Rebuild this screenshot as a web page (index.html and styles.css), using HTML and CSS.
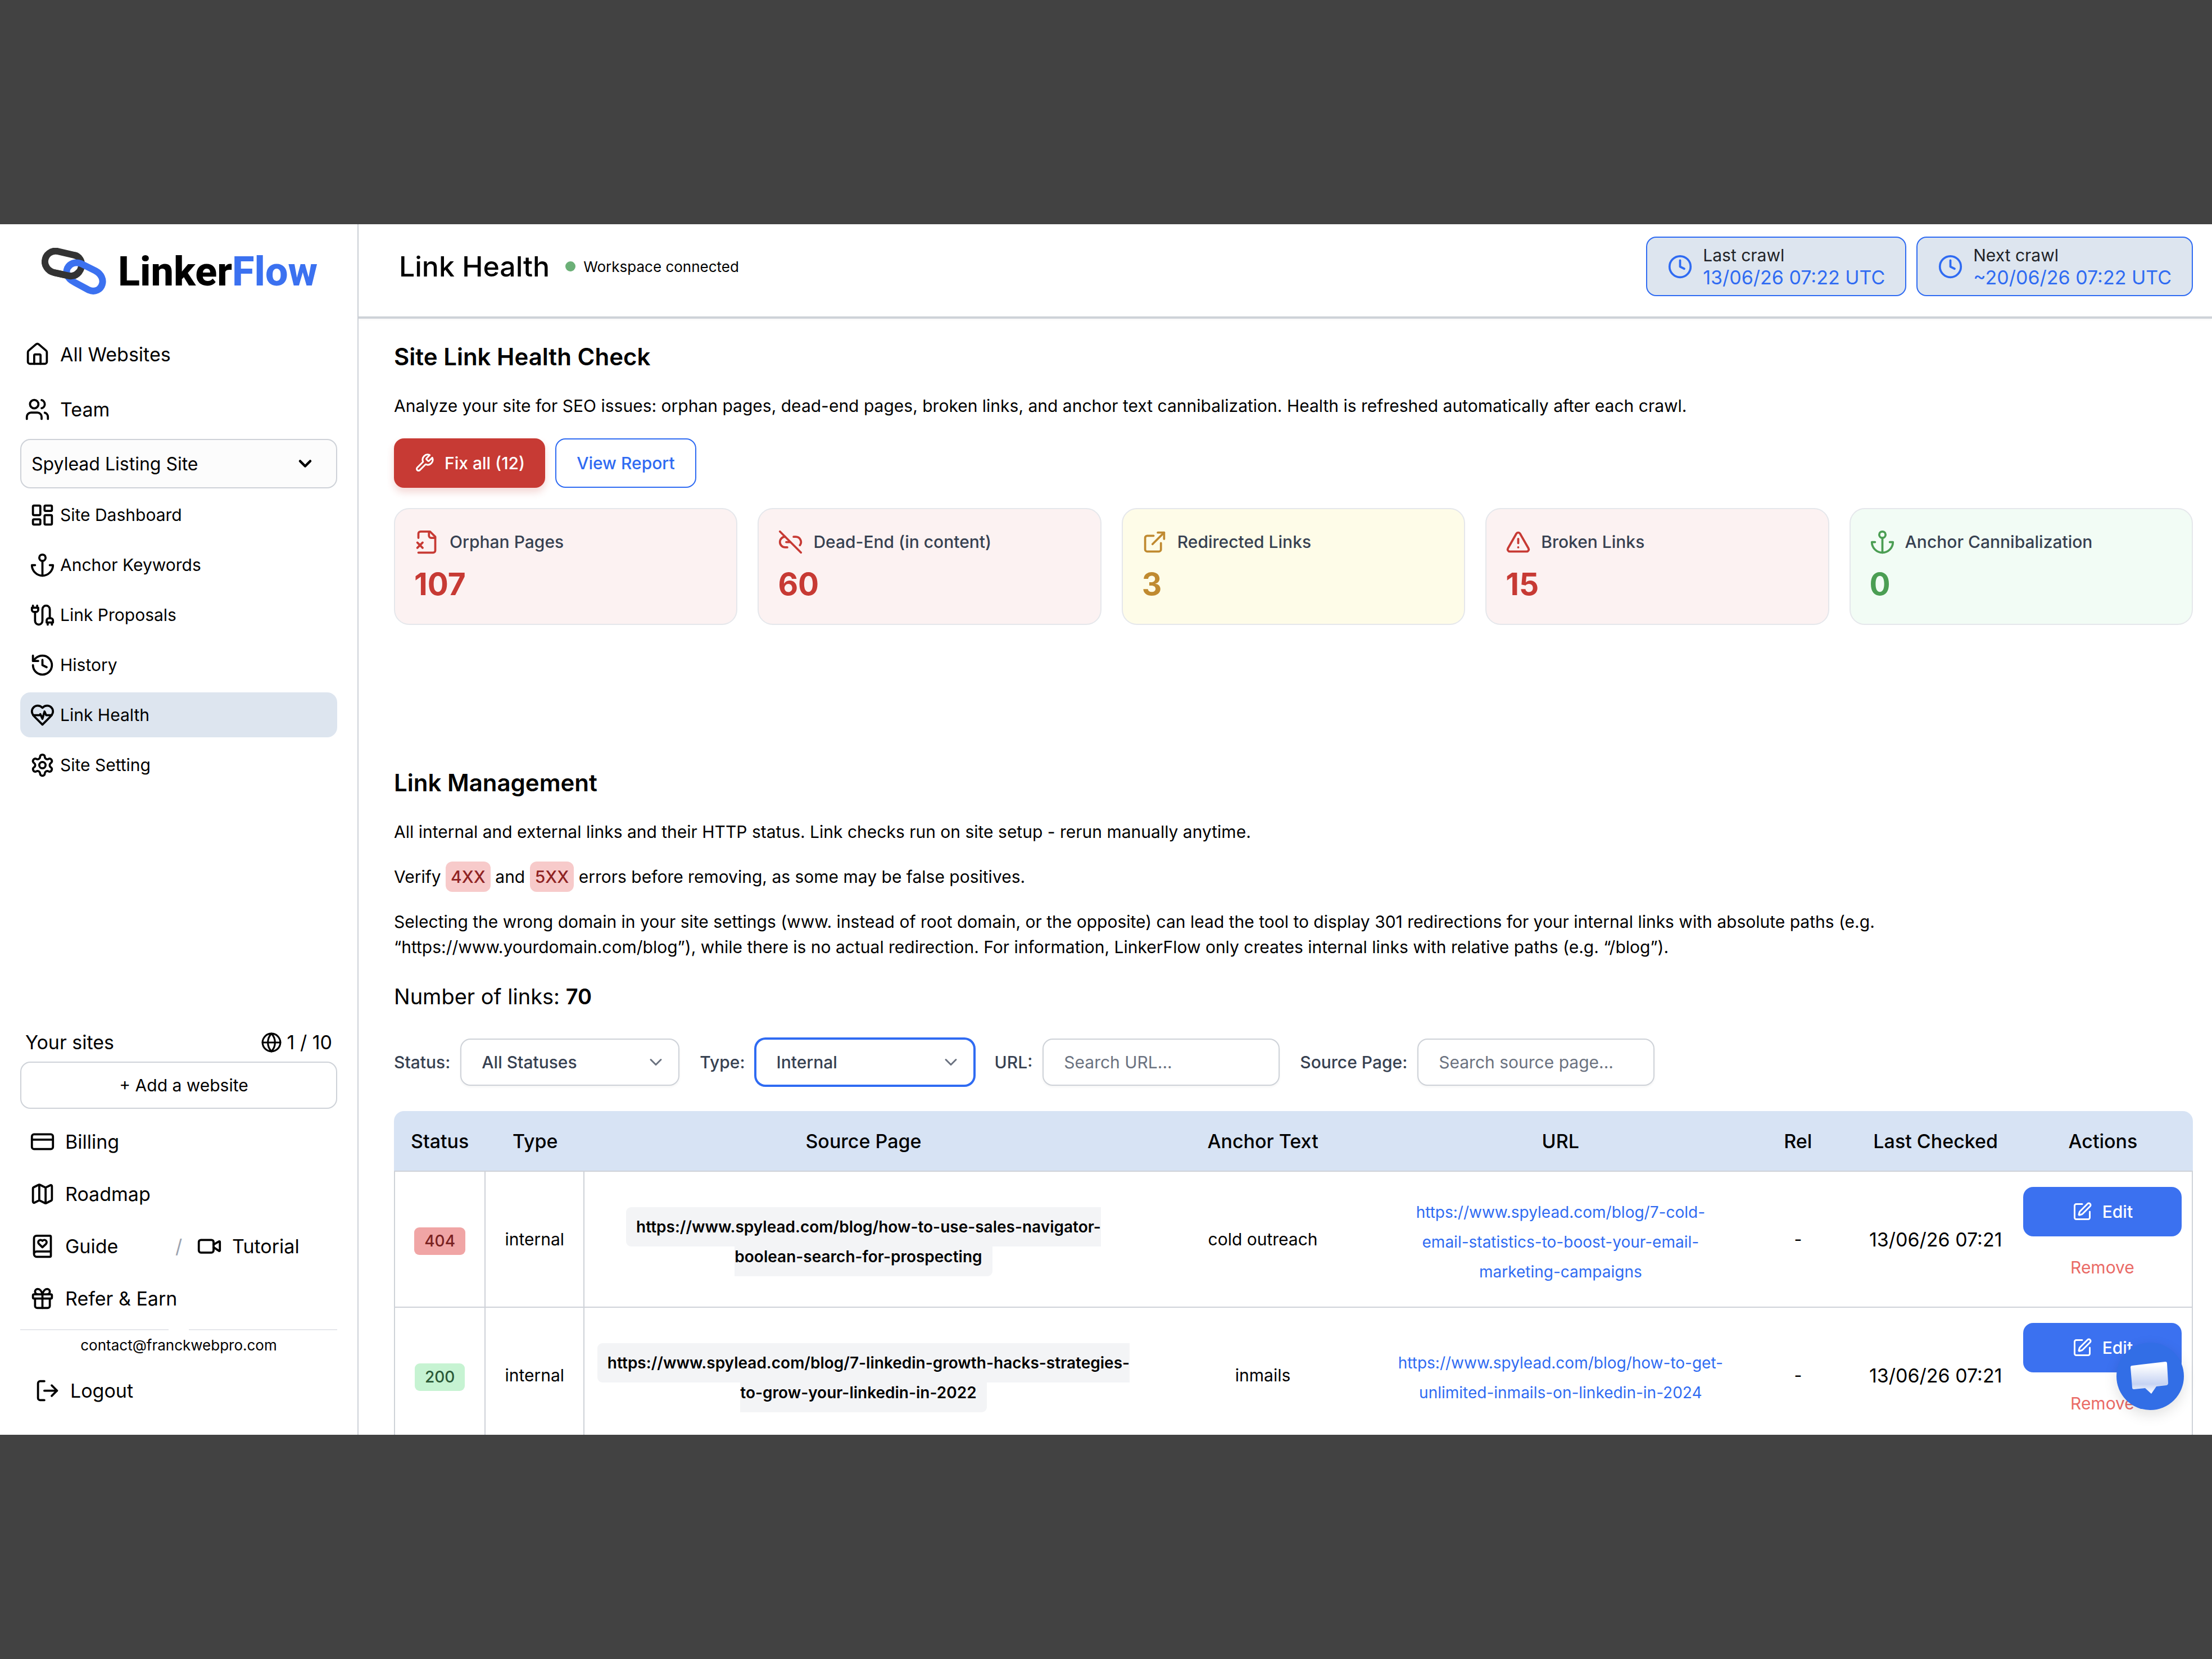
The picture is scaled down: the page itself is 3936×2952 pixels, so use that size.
FILE: index.html
```html
<!DOCTYPE html>
<html lang="en">
<head>
    <meta charset="UTF-8">
    <title>Link Health - LinkerFlow</title>
    <link rel="stylesheet" href="styles.css">
</head>
<body>
<div class="app">
    <aside class="sidebar">
        <a class="logo" href="#">
            <svg class="logo-mark" viewBox="0 0 116 84" fill="none" stroke-width="12">
                <path stroke="#333" d="M28 6L58 13C68 15 72 24 71 32C70 43 60 52 50 50L22 44C10 41 5 30 6 23C7 12 17 4 28 6Z"/>
                <path stroke="#3b71f0" d="M70 28L96 41C107 47 110 57 108 64C106 74 95 80 84 75L58 61C46 55 42 45 46 36C50 28 60 24 70 28Z"/>
                <path stroke="#333" d="M67 42C63 48 56 51 50 50L22 44"/>
            </svg>
            <span class="logo-text">Linker<span>Flow</span></span>
        </a>

        <nav class="main-nav">
            <a href="#">
                <svg class="icon" viewBox="0 0 24 24"><path d="M15 21v-8a1 1 0 0 0-1-1h-4a1 1 0 0 0-1 1v8"/><path d="M3 10a2 2 0 0 1 .709-1.528l7-6a2 2 0 0 1 2.582 0l7 6A2 2 0 0 1 21 10v9a2 2 0 0 1-2 2H5a2 2 0 0 1-2-2z"/></svg>
                All Websites
            </a>
            <a href="#">
                <svg class="icon" viewBox="0 0 24 24"><path d="M16 21v-2a4 4 0 0 0-4-4H6a4 4 0 0 0-4 4v2"/><circle cx="9" cy="7" r="4"/><path d="M22 21v-2a4 4 0 0 0-3-3.87"/><path d="M16 3.13a4 4 0 0 1 0 7.75"/></svg>
                Team
            </a>
        </nav>

        <div class="select site-select">
            <select aria-label="Site">
                <option>Spylead Listing Site</option>
            </select>
            <svg class="icon" viewBox="0 0 24 24"><path d="m6 9 6 6 6-6"/></svg>
        </div>

        <nav class="site-nav">
            <a href="#">
                <svg class="icon" viewBox="0 0 24 24"><rect x="3" y="3" width="7" height="9" rx="1"/><rect x="14" y="3" width="7" height="5" rx="1"/><rect x="14" y="12" width="7" height="9" rx="1"/><rect x="3" y="16" width="7" height="5" rx="1"/></svg>
                Site Dashboard
            </a>
            <a href="#">
                <svg class="icon" viewBox="0 0 24 24"><path d="M12 22V8"/><path d="M5 12H2a10 10 0 0 0 20 0h-3"/><circle cx="12" cy="5" r="3"/></svg>
                Anchor Keywords
            </a>
            <a href="#">
                <svg class="icon" viewBox="0 0 24 24"><path d="M4 9a2 2 0 0 1-2-2V5h6v2a2 2 0 0 1-2 2Z"/><path d="M3 5V3"/><path d="M7 5V3"/><path d="M19 15V6.5a3.5 3.5 0 0 0-7 0v11a3.5 3.5 0 0 1-7 0V9"/><path d="M17 21v-2"/><path d="M21 21v-2"/><path d="M22 19h-6v-2a2 2 0 0 1 2-2h2a2 2 0 0 1 2 2Z"/></svg>
                Link Proposals
            </a>
            <a href="#">
                <svg class="icon" viewBox="0 0 24 24"><path d="M3 12a9 9 0 1 0 9-9 9.75 9.75 0 0 0-6.74 2.74L3 8"/><path d="M3 3v5h5"/><path d="M12 7v5l4 2"/></svg>
                History
            </a>
            <a class="active" href="#">
                <svg class="icon" viewBox="0 0 24 24"><path d="M19 14c1.49-1.46 3-3.21 3-5.5A5.5 5.5 0 0 0 16.5 3c-1.76 0-3 .5-4.5 2-1.5-1.5-2.74-2-4.5-2A5.5 5.5 0 0 0 2 8.5c0 2.3 1.5 4.05 3 5.5l7 7Z"/><path d="M3.22 12H9.5l.5-1 2 4.5 2-7 1.5 3.5h5.27"/></svg>
                Link Health
            </a>
            <a href="#">
                <svg class="icon" viewBox="0 0 24 24"><path d="M12.22 2h-.44a2 2 0 0 0-2 2v.18a2 2 0 0 1-1 1.73l-.43.25a2 2 0 0 1-2 0l-.15-.08a2 2 0 0 0-2.73.73l-.22.38a2 2 0 0 0 .73 2.73l.15.1a2 2 0 0 1 1 1.72v.51a2 2 0 0 1-1 1.74l-.15.09a2 2 0 0 0-.73 2.73l.22.38a2 2 0 0 0 2.73.73l.15-.08a2 2 0 0 1 2 0l.43.25a2 2 0 0 1 1 1.73V20a2 2 0 0 0 2 2h.44a2 2 0 0 0 2-2v-.18a2 2 0 0 1 1-1.73l.43-.25a2 2 0 0 1 2 0l.15.08a2 2 0 0 0 2.73-.73l.22-.39a2 2 0 0 0-.73-2.73l-.15-.08a2 2 0 0 1-1-1.74v-.5a2 2 0 0 1 1-1.74l.15-.09a2 2 0 0 0 .73-2.73l-.22-.38a2 2 0 0 0-2.73-.73l-.15.08a2 2 0 0 1-2 0l-.43-.25a2 2 0 0 1-1-1.73V4a2 2 0 0 0-2-2z"/><circle cx="12" cy="12" r="3"/></svg>
                Site Setting
            </a>
        </nav>

        <div class="sidebar-bottom">
            <div class="your-sites">
                <span>Your sites</span>
                <span class="site-count">
                    <svg class="icon" viewBox="0 0 24 24"><circle cx="12" cy="12" r="10"/><path d="M12 2a14.5 14.5 0 0 0 0 20 14.5 14.5 0 0 0 0-20"/><path d="M2 12h20"/></svg>
                    1 / 10
                </span>
            </div>
            <button class="add-site" type="button">+ Add a website</button>

            <nav class="help-nav">
                <a href="#">
                    <svg class="icon" viewBox="0 0 24 24"><rect x="2" y="5" width="20" height="14" rx="2"/><path d="M2 10h20"/></svg>
                    Billing
                </a>
                <a href="#">
                    <svg class="icon" viewBox="0 0 24 24"><path d="M14.106 5.553a2 2 0 0 0 1.788 0l3.659-1.83A1 1 0 0 1 21 4.619v12.764a1 1 0 0 1-.553.894l-4.553 2.277a2 2 0 0 1-1.788 0l-4.212-2.106a2 2 0 0 0-1.788 0l-3.659 1.83A1 1 0 0 1 3 19.381V6.618a1 1 0 0 1 .553-.894l4.553-2.277a2 2 0 0 1 1.788 0z"/><path d="M15 5.764v15"/><path d="M9 3.236v15"/></svg>
                    Roadmap
                </a>
                <div class="help-row">
                    <a href="#">
                        <svg class="icon" viewBox="0 0 24 24"><path d="M16 8.2A2.22 2.22 0 0 0 13.8 6c-.8 0-1.4.3-1.8.9-.4-.6-1-.9-1.8-.9A2.22 2.22 0 0 0 8 8.2c0 .6.3 1.2.7 1.6A226.652 226.652 0 0 0 12 13a404 404 0 0 0 3.3-3.1 2.413 2.413 0 0 0 .7-1.7"/><path d="M4 19.5v-15A2.5 2.5 0 0 1 6.5 2H19a1 1 0 0 1 1 1v18a1 1 0 0 1-1 1H6.5a1 1 0 0 1 0-5H20"/></svg>
                        Guide
                    </a>
                    <span class="slash">/</span>
                    <a href="#">
                        <svg class="icon" viewBox="0 0 24 24"><path d="m16 13 5.223 3.482a.5.5 0 0 0 .777-.416V7.87a.5.5 0 0 0-.752-.432L16 10.5"/><rect x="2" y="6" width="14" height="12" rx="2"/></svg>
                        Tutorial
                    </a>
                </div>
                <a href="#">
                    <svg class="icon" viewBox="0 0 24 24"><rect x="3" y="8" width="18" height="4" rx="1"/><path d="M12 8v13"/><path d="M19 12v7a2 2 0 0 1-2 2H7a2 2 0 0 1-2-2v-7"/><path d="M7.5 8a2.5 2.5 0 0 1 0-5A4.8 8 0 0 1 12 8a4.8 8 0 0 1 4.5-5 2.5 2.5 0 0 1 0 5"/></svg>
                    Refer &amp; Earn
                </a>
            </nav>

            <div class="divider"></div>
            <p class="account">contact@franckwebpro.com</p>
            <a class="logout" href="#">
                <svg class="icon" viewBox="0 0 24 24"><path d="M9 21H5a2 2 0 0 1-2-2V5a2 2 0 0 1 2-2h4"/><path d="m16 17 5-5-5-5"/><path d="M21 12H9"/></svg>
                Logout
            </a>
        </div>
    </aside>

    <main class="main">
        <header class="topbar">
            <h1>Link Health</h1>
            <span class="workspace">Workspace connected</span>
            <div class="crawls">
                <div class="crawl">
                    <svg class="icon" viewBox="0 0 24 24"><circle cx="12" cy="12" r="10"/><path d="M12 6v6l4 2"/></svg>
                    <div>
                        <div class="crawl-label">Last crawl</div>
                        <div class="crawl-date">13/06/26 07:22 UTC</div>
                    </div>
                </div>
                <div class="crawl">
                    <svg class="icon" viewBox="0 0 24 24"><circle cx="12" cy="12" r="10"/><path d="M12 6v6l4 2"/></svg>
                    <div>
                        <div class="crawl-label">Next crawl</div>
                        <div class="crawl-date">~20/06/26 07:22 UTC</div>
                    </div>
                </div>
            </div>
        </header>

        <div class="content">
            <section class="health">
                <h2>Site Link Health Check</h2>
                <p>Analyze your site for SEO issues: orphan pages, dead-end pages, broken links, and anchor text cannibalization. Health is refreshed automatically after each crawl.</p>
                <div class="actions">
                    <button class="btn btn-danger" type="button">
                        <svg class="icon" viewBox="0 0 24 24"><path d="M14.7 6.3a1 1 0 0 0 0 1.4l1.6 1.6a1 1 0 0 0 1.4 0l3.77-3.77a6 6 0 0 1-7.94 7.94l-6.91 6.91a2.12 2.12 0 0 1-3-3l6.91-6.91a6 6 0 0 1 7.94-7.94l-3.76 3.76z"/></svg>
                        Fix all (12)
                    </button>
                    <button class="btn btn-outline" type="button">View Report</button>
                </div>
                <div class="cards">
                    <div class="card card-red">
                        <div class="card-title">
                            <svg class="icon" viewBox="0 0 24 24"><path d="M4 22h14a2 2 0 0 0 2-2V7l-5-5H6a2 2 0 0 0-2 2v4"/><path d="M14 2v4a2 2 0 0 0 2 2h4"/><path d="m8 12.5-5 5"/><path d="m3 12.5 5 5"/></svg>
                            Orphan Pages
                        </div>
                        <div class="card-value">107</div>
                    </div>
                    <div class="card card-red">
                        <div class="card-title">
                            <svg class="icon" viewBox="0 0 24 24"><path d="M9 17H7A5 5 0 0 1 7 7"/><path d="M15 7h2a5 5 0 0 1 4 8"/><path d="M8 12h4"/><path d="m2 2 20 20"/></svg>
                            Dead-End (in content)
                        </div>
                        <div class="card-value">60</div>
                    </div>
                    <div class="card card-yellow">
                        <div class="card-title">
                            <svg class="icon" viewBox="0 0 24 24"><path d="M15 3h6v6"/><path d="M10 14 21 3"/><path d="M18 13v6a2 2 0 0 1-2 2H5a2 2 0 0 1-2-2V8a2 2 0 0 1 2-2h6"/></svg>
                            Redirected Links
                        </div>
                        <div class="card-value">3</div>
                    </div>
                    <div class="card card-red">
                        <div class="card-title">
                            <svg class="icon" viewBox="0 0 24 24"><path d="m21.73 18-8-14a2 2 0 0 0-3.48 0l-8 14A2 2 0 0 0 4 21h16a2 2 0 0 0 1.73-3"/><path d="M12 9v4"/><path d="M12 17h.01"/></svg>
                            Broken Links
                        </div>
                        <div class="card-value">15</div>
                    </div>
                    <div class="card card-green">
                        <div class="card-title">
                            <svg class="icon" viewBox="0 0 24 24"><path d="M12 22V8"/><path d="M5 12H2a10 10 0 0 0 20 0h-3"/><circle cx="12" cy="5" r="3"/></svg>
                            Anchor Cannibalization
                        </div>
                        <div class="card-value">0</div>
                    </div>
                </div>
            </section>

            <section class="links">
                <h2>Link Management</h2>
                <p>All internal and external links and their HTTP status. Link checks run on site setup - rerun manually anytime.</p>
                <p>Verify <span class="code">4XX</span> and <span class="code">5XX</span> errors before removing, as some may be false positives.</p>
                <p class="note">Selecting the wrong domain in your site settings (www. instead of root domain, or the opposite) can lead the tool to display 301 redirections for your internal links with absolute paths (e.g. “https://www.yourdomain.com/blog”), while there is no actual redirection. For information, LinkerFlow only creates internal links with relative paths (e.g. “/blog”).</p>
                <div class="link-count">Number of links: <strong>70</strong></div>

                <form class="filters">
                    <div class="filter">
                        <label for="status">Status:</label>
                        <div class="select">
                            <select id="status"><option>All Statuses</option></select>
                            <svg class="icon" viewBox="0 0 24 24"><path d="m6 9 6 6 6-6"/></svg>
                        </div>
                    </div>
                    <div class="filter">
                        <label for="type">Type:</label>
                        <div class="select focused">
                            <select id="type"><option>Internal</option></select>
                            <svg class="icon" viewBox="0 0 24 24"><path d="m6 9 6 6 6-6"/></svg>
                        </div>
                    </div>
                    <div class="filter">
                        <label for="url">URL:</label>
                        <input id="url" type="text" placeholder="Search URL...">
                    </div>
                    <div class="filter">
                        <label for="source">Source Page:</label>
                        <input id="source" type="text" placeholder="Search source page...">
                    </div>
                </form>

                <table>
                    <colgroup>
                        <col class="col-status">
                        <col class="col-type">
                        <col class="col-source">
                        <col class="col-anchor">
                        <col class="col-url">
                        <col class="col-rel">
                        <col class="col-checked">
                        <col class="col-actions">
                    </colgroup>
                    <thead>
                    <tr>
                        <th>Status</th>
                        <th>Type</th>
                        <th>Source Page</th>
                        <th>Anchor Text</th>
                        <th>URL</th>
                        <th>Rel</th>
                        <th>Last Checked</th>
                        <th>Actions</th>
                    </tr>
                    </thead>
                    <tbody>
                    <tr>
                        <td><span class="status status-error">404</span></td>
                        <td>internal</td>
                        <td class="source"><span>https://www.spylead.com/blog/how-to-use-sales-navigator-boolean-search-for-prospecting</span></td>
                        <td>cold outreach</td>
                        <td class="url"><a href="#">https://www.spylead.com/blog/7-cold-email-statistics-to-boost-your-email-marketing-campaigns</a></td>
                        <td>-</td>
                        <td class="checked">13/06/26 07:21</td>
                        <td class="row-actions">
                            <button class="btn btn-edit" type="button">
                                <svg class="icon" viewBox="0 0 24 24"><path d="M12 3H5a2 2 0 0 0-2 2v14a2 2 0 0 0 2 2h14a2 2 0 0 0 2-2v-7"/><path d="M18.375 2.625a1 1 0 0 1 3 3l-9.013 9.014a2 2 0 0 1-.853.505l-2.873.84a.5.5 0 0 1-.62-.62l.84-2.873a2 2 0 0 1 .506-.852z"/></svg>
                                Edit
                            </button>
                            <button class="btn btn-remove" type="button">Remove</button>
                        </td>
                    </tr>
                    <tr>
                        <td><span class="status status-ok">200</span></td>
                        <td>internal</td>
                        <td class="source"><span>https://www.spylead.com/blog/7-linkedin-growth-hacks-strategies-to-grow-your-linkedin-in-2022</span></td>
                        <td>inmails</td>
                        <td class="url"><a href="#">https://www.spylead.com/blog/how-to-get-unlimited-inmails-on-linkedin-in-2024</a></td>
                        <td>-</td>
                        <td class="checked">13/06/26 07:21</td>
                        <td class="row-actions">
                            <button class="btn btn-edit" type="button">
                                <svg class="icon" viewBox="0 0 24 24"><path d="M12 3H5a2 2 0 0 0-2 2v14a2 2 0 0 0 2 2h14a2 2 0 0 0 2-2v-7"/><path d="M18.375 2.625a1 1 0 0 1 3 3l-9.013 9.014a2 2 0 0 1-.853.505l-2.873.84a.5.5 0 0 1-.62-.62l.84-2.873a2 2 0 0 1 .506-.852z"/></svg>
                                Edit
                            </button>
                            <button class="btn btn-remove" type="button">Remove</button>
                        </td>
                    </tr>
                    </tbody>
                </table>
            </section>
        </div>
    </main>

    <button class="chat" type="button" aria-label="Open chat">
        <svg viewBox="0 0 120 120">
            <defs>
                <linearGradient id="bubble" x1="0" y1="0" x2="0" y2="1">
                    <stop offset="0.1" stop-color="#fff"/>
                    <stop offset="0.7" stop-color="#c6d3f3"/>
                    <stop offset="1" stop-color="#fff"/>
                </linearGradient>
            </defs>
            <path fill="url(#bubble)" d="M28 41L87 34Q90 34 90 37L92 72Q92 75 89 76L71 78L62 91L51 81L31 83Q28 83 28 80L25 44Q25 41 28 41Z"/>
        </svg>
    </button>
</div>
</body>
</html>
```
FILE: styles.css
```css
* {
    box-sizing: border-box;
}

body {
    display: flex;
    height: 100vh;
    margin: 0;
    padding: 399px 0;
    background-color: #424242;
    color: #000;
    font-family: Inter, "Liberation Sans", sans-serif;
    font-size: 30px;
    line-height: 45px;
}

a {
    color: inherit;
    text-decoration: none;
}

button, input, select {
    font: inherit;
    color: inherit;
}

h1, h2, p {
    margin: 0;
}

.icon {
    flex: none;
    width: 45px;
    height: 45px;
    fill: none;
    stroke: currentColor;
    stroke-width: 2;
    stroke-linecap: round;
    stroke-linejoin: round;
}

.app {
    position: relative;
    display: flex;
    flex: 1;
    min-width: 0;
    overflow: hidden;
    background-color: #fff;
}

/* Sidebar */

.sidebar {
    display: flex;
    flex: none;
    flex-direction: column;
    width: 638px;
    padding: 36px 36px 39px;
    border-right: 2px solid #ced2d8;
}

.logo {
    display: flex;
    align-items: center;
    gap: 20px;
    height: 96px;
    padding-left: 38px;
}

.logo-mark {
    flex: none;
    width: 116px;
    height: 84px;
}

.logo-text {
    font-family: Roboto, Inter, sans-serif;
    font-size: 72px;
    font-weight: 800;
}

.logo-text span {
    color: #3b71f0;
}

.main-nav {
    margin: 50px 0 4px;
}

.main-nav a {
    display: flex;
    align-items: center;
    gap: 18px;
    height: 98px;
    padding-left: 8px;
    font-size: 34px;
}

.select {
    display: grid;
    align-items: center;
}

.select select {
    grid-area: 1 / 1;
    width: 100%;
    border: 2px solid #ced2d8;
    border-radius: 18px;
    background-color: #fff;
    appearance: none;
}

.select .icon {
    grid-area: 1 / 1;
    justify-self: end;
    width: 36px;
    height: 36px;
    pointer-events: none;
}

.site-select select {
    height: 88px;
    padding: 0 18px;
    background-color: #fcfcfc;
    font-size: 32px;
}

.site-select .icon {
    margin-right: 39px;
    stroke-width: 3;
}

.site-nav {
    display: flex;
    flex-direction: column;
    gap: 9px;
    margin-top: 7px;
}

.site-nav a {
    display: flex;
    align-items: center;
    gap: 9px;
    height: 80px;
    padding-left: 17px;
    border-radius: 18px;
}

.site-nav .active {
    background-color: #dde5ef;
}

.sidebar-bottom {
    margin-top: auto;
    font-size: 34px;
}

.your-sites {
    display: flex;
    justify-content: space-between;
    padding: 0 9px;
    margin-bottom: 12px;
}

.site-count {
    display: flex;
    align-items: center;
    gap: 9px;
}

.site-count .icon {
    width: 38px;
    height: 38px;
}

.add-site {
    width: 100%;
    height: 84px;
    padding-left: 24px;
    border: 2px solid #ced2d8;
    border-radius: 18px;
    background-color: #fff;
    font-size: 30px;
}

.help-nav {
    padding: 12px 0 8px 17px;
}

.help-nav a {
    display: flex;
    align-items: center;
    gap: 18px;
    height: 93px;
}

.help-row {
    display: grid;
    grid-template-columns: 259px 38px 1fr;
    align-items: center;
}

.slash {
    color: #9ca3af;
}

.divider {
    display: flex;
    gap: 36px;
}

.divider::before,
.divider::after {
    content: "";
    flex: 1;
    border-top: 2px solid #e5e7eb;
}

.account {
    padding-top: 4px;
    font-size: 26px;
    text-align: center;
}

.logout {
    display: flex;
    align-items: center;
    gap: 18px;
    height: 80px;
    margin-top: 18px;
    padding-left: 26px;
}

/* Top bar */

.main {
    flex: 1;
    min-width: 0;
}

.topbar {
    display: flex;
    align-items: center;
    height: 168px;
    padding: 0 34px 14px 72px;
    border-bottom: 4px solid #ced2d8;
    box-shadow: 0 2px 4px rgba(0, 0, 0, 0.04);
}

.topbar h1 {
    font-size: 50px;
    font-weight: 500;
}

.workspace {
    display: flex;
    align-items: center;
    gap: 14px;
    margin-left: 28px;
    font-size: 26px;
}

.workspace::before {
    content: "";
    width: 18px;
    height: 18px;
    border-radius: 50%;
    background-color: #6bb077;
}

.crawls {
    display: flex;
    gap: 18px;
    margin-left: auto;
}

.crawl {
    display: flex;
    align-items: center;
    gap: 18px;
    height: 106px;
    padding: 0 36px;
    border: 2px solid #2f6bf2;
    border-radius: 18px;
    background-color: #dde5ef;
    color: #2f6bf2;
    line-height: 40px;
}

.crawl-label {
    color: #1f2328;
}

.crawl-date {
    font-size: 34px;
}

/* Content */

.content {
    padding: 41px 34px 0 63px;
}

h2 {
    margin-bottom: 38px;
    font-size: 42px;
    font-weight: 600;
    line-height: 54px;
}

.content p {
    margin-bottom: 35px;
}

.actions {
    display: flex;
    gap: 18px;
    margin-bottom: 36px;
}

.btn {
    display: flex;
    align-items: center;
    justify-content: center;
    gap: 18px;
    height: 88px;
    padding: 0 36px;
    border: 0;
    border-radius: 18px;
    background-color: transparent;
}

.btn .icon {
    width: 36px;
    height: 36px;
}

.btn-danger {
    background-color: #c73a34;
    color: #fff;
    font-weight: 500;
    box-shadow: 0 8px 14px rgba(199, 58, 52, 0.2);
}

.btn-outline {
    border: 2px solid #2f6bf2;
    color: #2f6bf2;
    font-weight: 500;
}

.cards {
    display: grid;
    grid-template-columns: repeat(5, 1fr);
    gap: 36px;
}

.card {
    height: 208px;
    padding: 36px 34px;
    border: 2px solid #e5e7eb;
    border-radius: 27px;
}

.card-title {
    display: flex;
    align-items: center;
    gap: 18px;
    color: #374151;
    font-weight: 500;
}

.card-value {
    margin-top: 21px;
    font-size: 55px;
    font-weight: 700;
    line-height: 63px;
}

.card-red {
    background-color: #fcf2f2;
}

.card-red .icon,
.card-red .card-value {
    color: #c73a34;
}

.card-yellow {
    background-color: #fefce8;
}

.card-yellow .icon,
.card-yellow .card-value {
    color: #c08a30;
}

.card-green {
    background-color: #f2fcf5;
}

.card-green .icon,
.card-green .card-value {
    color: #4b9e53;
}

.links {
    margin-top: 254px;
}

.code {
    padding: 9px;
    border-radius: 12px;
    background-color: #f7caca;
    color: #8f2323;
    font-weight: 500;
}

.note {
    max-width: 2700px;
}

.link-count {
    margin: 38px 0 48px;
    font-size: 38px;
    line-height: 54px;
}

.link-count strong {
    font-weight: 600;
}

.filters {
    display: flex;
    gap: 36px;
    margin-bottom: 45px;
}

.filter {
    display: flex;
    align-items: center;
    gap: 18px;
    color: #374151;
    font-weight: 500;
}

.filter select,
.filter input {
    height: 84px;
    padding: 0 36px;
    border: 2px solid #ced2d8;
    border-radius: 18px;
    box-shadow: 0 2px 4px rgba(0, 0, 0, 0.05);
}

.filter select {
    width: 390px;
}

.filter input {
    width: 422px;
    font-weight: 400;
}

.filter input::placeholder {
    color: #6b7280;
    opacity: 1;
}

.filter .icon {
    margin-right: 24px;
    color: #6b7280;
}

.filter .focused select {
    border-color: #2f6bf2;
    box-shadow: 0 0 0 2px #2f6bf2;
}

/* Links table */

table {
    width: 100%;
    border-spacing: 0;
    table-layout: fixed;
}

.col-status { width: 5.1%; }
.col-type { width: 5.5%; }
.col-source { width: 31%; }
.col-anchor { width: 13.4%; }
.col-url { width: 19.7%; }
.col-rel { width: 6.7%; }
.col-checked { width: 8.6%; }
.col-actions { width: 10%; }

th {
    height: 108px;
    padding: 0;
    border-bottom: 2px solid #ced2d8;
    background-color: #d7e3f4;
    font-size: 34px;
    font-weight: 500;
}

th:first-child {
    border-top-left-radius: 18px;
}

th:last-child {
    border-top-right-radius: 18px;
}

td {
    padding: 27px 18px 26px;
    border-bottom: 2px solid #ced2d8;
    text-align: center;
}

td:first-child {
    border-left: 2px solid #ced2d8;
}

td:first-child,
td:nth-child(2),
td:last-child {
    border-right: 2px solid #ced2d8;
}

.status {
    display: inline-block;
    margin-top: 6px;
    padding: 2px 18px;
    border-radius: 9px;
    font-size: 28px;
    font-weight: 500;
}

.status-error {
    background-color: #f0a5a5;
    color: #7a2222;
}

.status-ok {
    background-color: #c6f3d2;
    color: #2c5a38;
}

.source,
.url {
    padding: 32px 18px 22px;
    font-size: 28px;
    line-height: 53px;
}

.source span {
    padding: 18px;
    border-radius: 9px;
    background-color: #f3f4f6;
    font-weight: 600;
}

.url a {
    color: #2f6bf2;
}

.checked {
    padding: 0;
    font-size: 34px;
}

.row-actions .btn {
    width: 100%;
}

.btn-edit {
    margin-bottom: 11px;
    background-color: #3b71f0;
    color: #fff;
    font-weight: 500;
}

.btn-remove {
    color: #ea6a66;
}

/* Chat launcher floats over the page corner */

.chat {
    position: absolute;
    right: 50px;
    bottom: 44px;
    width: 120px;
    height: 120px;
    padding: 0;
    border: 0;
    border-radius: 50%;
    background-color: #326ee6;
    box-shadow: 0 8px 24px rgba(0, 0, 0, 0.12);
}

.chat svg {
    display: block;
    width: 120px;
    height: 120px;
}
```
